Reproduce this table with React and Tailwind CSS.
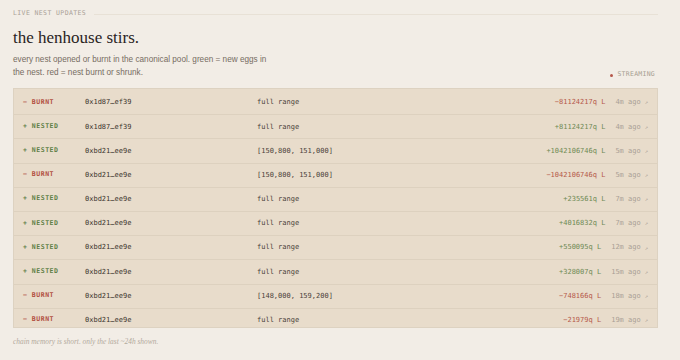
import React from "react";

const rows = [
  { t: "b", addr: "0x1d87…ef39", range: "full range", amt: "−81124217q", time: "4m ago" },
  { t: "n", addr: "0x1d87…ef39", range: "full range", amt: "+81124217q", time: "4m ago" },
  { t: "n", addr: "0xbd21…ee9e", range: "[150,800, 151,000]", amt: "+1042106746q", time: "5m ago" },
  { t: "b", addr: "0xbd21…ee9e", range: "[150,800, 151,000]", amt: "−1042106746q", time: "5m ago" },
  { t: "n", addr: "0xbd21…ee9e", range: "full range", amt: "+235561q", time: "7m ago" },
  { t: "n", addr: "0xbd21…ee9e", range: "full range", amt: "+4016832q", time: "7m ago" },
  { t: "n", addr: "0xbd21…ee9e", range: "full range", amt: "+550095q", time: "12m ago" },
  { t: "n", addr: "0xbd21…ee9e", range: "full range", amt: "+328007q", time: "15m ago" },
  { t: "b", addr: "0xbd21…ee9e", range: "[148,000, 159,200]", amt: "−748166q", time: "18m ago" },
  { t: "b", addr: "0xbd21…ee9e", range: "full range", amt: "−21979q", time: "19m ago" },
];

const mono = "font-['DejaVu_Sans_Mono','Liberation_Mono',monospace]";

export default function App() {
  return (
    <div className="w-[680px] h-[360px] bg-[#f2ede6] overflow-hidden pl-[13px] pr-[22px] pt-[9px] text-[#2a2520]">
      <div className="flex items-center gap-[8px] h-[10px]">
        <span className={`${mono} text-[6.5px] tracking-[0.06em] text-[#aaa196]`}>LIVE NEST UPDATES</span>
        <div className="flex-1 h-px bg-[#e8e1d6]" />
      </div>
      <h1 className="mt-[7px] font-['Liberation_Serif','Times_New_Roman',serif] text-[17px] leading-[24px] text-[#2a241e]">
        the henhouse stirs.
      </h1>
      <div className="flex items-end justify-between mt-[3px]">
        <p className="w-[262px] font-['Liberation_Sans','Arial',sans-serif] text-[8.2px] leading-[13px] text-[#766c62]">
          every nest opened or burnt in the canonical pool. green = new eggs in the nest. red = nest burnt or shrunk.
        </p>
        <div className="flex items-center gap-[4px] mb-[-1px] pr-[3px]">
          <span className="w-[3px] h-[3px] rounded-full bg-[#b5574a]" />
          <span className={`${mono} text-[6.5px] tracking-[0.04em] text-[#a69d91]`}>STREAMING</span>
        </div>
      </div>
      <div className="mt-[9px] h-[240px] pt-[2px] overflow-hidden border border-[#ddd2c1] bg-[#e8dccb]">
        {rows.map((r, i) => {
          const burnt = r.t === "b";
          return (
            <div
              key={i}
              className={`flex items-center h-[24.2px] border-b border-[#ddd1bf] pl-[9px] pr-[9px] ${mono} text-[7px]`}
            >
              <span
                className={`w-[62px] font-bold text-[6.5px] tracking-[0.08em] ${burnt ? "text-[#b14e3e]" : "text-[#5f7f47]"}`}
              >
                {burnt ? "− BURNT" : "+ NESTED"}
              </span>
              <span className="w-[172px] text-[#3a332c]">{r.addr}</span>
              <span className="flex-1 text-[#4a423a]">{r.range}</span>
              <span className={`${burnt ? "text-[#b5584a]" : "text-[#6f8a55]"}`}>
                {r.amt} L
              </span>
              <span className="ml-[10px] text-[#a8a095]">{r.time}</span>
              <span className="ml-[4px] text-[5.5px] text-[#a8a095]">↗</span>
            </div>
          );
        })}
      </div>
      <p className="mt-[8px] font-['Liberation_Serif','Times_New_Roman',serif] italic text-[7.4px] text-[#b3aa9d]">
        chain memory is short. only the last ~24h shown.
      </p>
    </div>
  );
}
